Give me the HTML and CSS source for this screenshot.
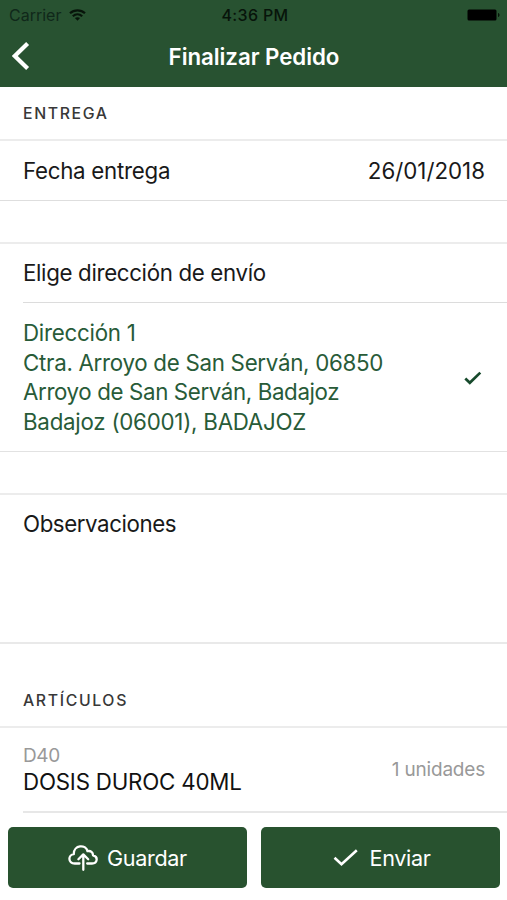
FILE: index.html
```
<!DOCTYPE html>
<html lang="es">
<head>
<meta charset="utf-8">
<meta name="viewport" content="width=device-width, initial-scale=1">
<title>Finalizar Pedido</title>
<link rel="stylesheet" href="styles.css">
</head>
<body>
<div class="screen">
  <header class="header">
    <div class="status">
      <div class="carrier">
        <span class="carrier-name">Carrier</span>
        <svg class="wifi" width="17" height="12" viewBox="0 0 17 12" fill="none" stroke="#07140a" stroke-width="2.200"><path d="M1 4.3C5.2.4 11.8.4 16 4.3"/><path d="M3.8 7.2c2.7-2.4 6.700-2.4 9.400 0"/><path d="M8.500 11.700L5.900 9.100c1.500-1.300 3.700-1.300 5.200 0z" fill="#07140a" stroke="none"/></svg>
      </div>
      <span class="clock">4:36 PM</span>
      <svg class="battery" width="33" height="12" viewBox="0 0 33 12"><rect x=".5" y=".5" width="29" height="11" rx="1.500" fill="#000"/><path d="M31 4c2 .5 2 3.500 0 4z" fill="#07140a"/></svg>
    </div>
    <div class="navbar">
      <svg class="back" width="18" height="28" viewBox="0 0 18 28" fill="none" stroke="#fff" stroke-width="4.200"><path d="M15.600 1.500L2.800 14l12.800 12.500"/></svg>
      <h1 class="title">Finalizar Pedido</h1>
    </div>
  </header>
  <main class="content">
    <h2 class="section">Entrega</h2>
    <div class="row date-row">
      <span class="date-label">Fecha entrega</span>
      <span class="date">26/01/2018</span>
    </div>
    <div class="gap"></div>
    <div class="row choose"><span>Elige dirección de envío</span></div>
    <div class="row address">
      <p class="lines"><span class="l1">Dirección 1</span><br><span class="l2">Ctra. Arroyo de San Serván, 06850</span><br><span class="l3">Arroyo de San Serván, Badajoz</span><br><span class="l4">Badajoz (06001), BADAJOZ</span></p>
      <svg class="check" width="18" height="15" viewBox="0 0 18 15" fill="none" stroke="#174a2c" stroke-width="2.700"><path d="M1.300 7.600L5.800 11.800 16.300 1.600"/></svg>
    </div>
    <div class="gap"></div>
    <div class="row notes"><span>Observaciones</span></div>
    <h2 class="section articles">Artículos</h2>
    <div class="row item">
      <div>
        <div class="code">D40</div>
        <div class="name">DOSIS DUROC 40ML</div>
      </div>
      <span class="units">1 unidades</span>
    </div>
  </main>
  <footer class="actions">
    <button class="button">
      <svg width="30" height="26" viewBox="0 0 30 26" fill="none" stroke="#fff" stroke-width="2.300" stroke-linecap="round" stroke-linejoin="round"><path d="M11.500 18.500H6.800C-.2 18.200-.2 9.800 5.800 9.200C5.500-.5 18-.8 19.500 6.200C22.800 5.400 25 7.500 25 10.300C30.500 11.500 29.500 18.500 24 18.500H19.200"/><path d="M15.300 24.800V9.800M10.400 14.300l4.900-4.900 4.900 4.900"/></svg>
      <span>Guardar</span>
    </button>
    <button class="button send">
      <svg width="25" height="18" viewBox="0 0 25 18" fill="none" stroke="#fff" stroke-width="2.600"><path d="M1.500 8.800L8.500 15.300 23.800 1.200"/></svg>
      <span>Enviar</span>
    </button>
  </footer>
</div>
</body>
</html>
```
FILE: styles.css
```
* { box-sizing: border-box; }
body { margin: 0; background: #fff; color: #191919; font: 22.3px/30px Inter, "Liberation Sans", sans-serif; }
h1, h2, p { margin: 0; }
svg { display: block; flex: none; }
.screen { height: 900px; display: flex; flex-direction: column; overflow: hidden; }
.header { height: 87px; flex: none; background: #285231; }
.status { height: 28px; display: grid; grid-template-columns: 1fr auto 1fr; align-items: center; padding: 2px 7px 0 9px; font-size: 16px; line-height: 20px; color: #07140a; }
.carrier { display: flex; align-items: center; gap: 8px; }
.carrier-name { color: #10281a; letter-spacing: 0; }
.clock { font-weight: 500; letter-spacing: 0.35px; margin-left: 1px; }
.battery { justify-self: end; }
.navbar { height: 59px; display: grid; grid-template-columns: 36px 1fr 36px; align-items: center; padding-bottom: 2px; }
.back { margin-left: 12px; margin-top: -2px; }
.title { text-align: center; color: #fff; font-size: 22.3px; font-weight: 600; line-height: 30px; letter-spacing: -0.05px; padding-left: 1px; }
.content { flex: 1; }
.section { height: 54px; padding: 12px 23px 0; border-bottom: 2px solid #ececec; font-size: 15.8px; line-height: 30px; font-weight: 500; letter-spacing: 1.65px; text-transform: uppercase; color: #383838; }
.row { display: flex; justify-content: space-between; padding: 0 22px 0 23px; }
.date-row { height: 60px; align-items: center; border-bottom: 1px solid #dedede; }
.date-label { letter-spacing: -0.27px; }
.gap { height: 43px; border-bottom: 2px solid #ececec; }
.choose { height: 59px; margin-left: 23px; padding-left: 0; align-items: center; border-bottom: 1px solid #dcdcdc; letter-spacing: -0.34px; }
.address { height: 149px; padding-top: 15px; border-bottom: 1px solid #e2e2e2; color: #285b38; }
.lines { line-height: 29.7px; }
.l1 { letter-spacing: -0.25px; }
.l2 { letter-spacing: -0.28px; }
.l3 { letter-spacing: -0.37px; }
.l4 { letter-spacing: -0.24px; }
.check { margin: 53px 3px 0 0; }
.notes { height: 149px; padding-top: 14px; border-bottom: 2px solid #e9e9e9; letter-spacing: -0.42px; }
.articles { height: 84px; padding-top: 42px; }
.item { height: 85px; margin-left: 23px; padding-left: 0; align-items: center; border-bottom: 2px solid #e7e7e7; }
.code { color: #999; font-size: 19px; line-height: 26px; letter-spacing: -0.4px; }
.name { line-height: 26px; margin-bottom: 2px; color: #111; letter-spacing: -0.2px; }
.units { color: #999; font-size: 19px; letter-spacing: -0.2px; }
.actions { height: 73px; flex: none; display: grid; grid-template-columns: 239px 239px; gap: 14px; padding: 0 8px; }
.button { height: 61px; display: flex; align-items: center; justify-content: center; gap: 9px; padding: 1px 0 0; border: 0; border-radius: 5px; background: #28522f; color: #fff; font: inherit; font-size: 21.6px; letter-spacing: -0.35px; }
.send { gap: 12px; padding-left: 2px; }
```
